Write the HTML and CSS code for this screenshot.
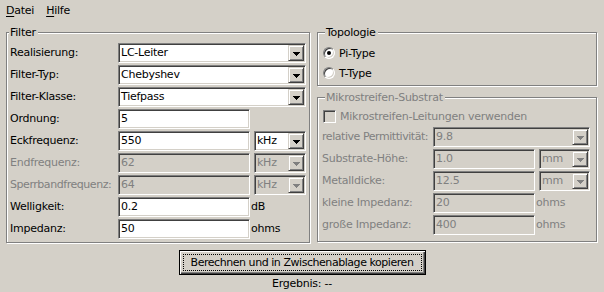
FILE: index.html
```html
<!DOCTYPE html>
<html lang="de">
<head>
    <meta charset="UTF-8">
    <title>Filter-Entwurf</title>
    <link rel="stylesheet" href="styles.css">
</head>
<body>
    <div class="menubar">
        <span class="menu"><u>D</u>atei</span>
        <span class="menu"><u>H</u>ilfe</span>
    </div>

    <div class="main">
        <div class="group filter">
            <span class="group-title">Filter</span>
            <div class="form">
                <span class="label">Realisierung:</span>
                <div class="combo span"><span class="value">LC-Leiter</span><span class="arrow"></span></div>

                <span class="label">Filter-Typ:</span>
                <div class="combo span"><span class="value">Chebyshev</span><span class="arrow"></span></div>

                <span class="label">Filter-Klasse:</span>
                <div class="combo span"><span class="value">Tiefpass</span><span class="arrow"></span></div>

                <span class="label">Ordnung:</span>
                <div class="field">5</div>
                <span></span>

                <span class="label">Eckfrequenz:</span>
                <div class="field">550</div>
                <div class="combo unit"><span class="value">kHz</span><span class="arrow"></span></div>

                <span class="label off">Endfrequenz:</span>
                <div class="field off">62</div>
                <div class="combo unit off"><span class="value">kHz</span><span class="arrow"></span></div>

                <span class="label off tight">Sperrbandfrequenz:</span>
                <div class="field off">64</div>
                <div class="combo unit off"><span class="value">kHz</span><span class="arrow"></span></div>

                <span class="label">Welligkeit:</span>
                <div class="field">0.2</div>
                <span class="label unit-text">dB</span>

                <span class="label">Impedanz:</span>
                <div class="field">50</div>
                <span class="label unit-text">ohms</span>
            </div>
        </div>

        <div class="side">
            <div class="group topo">
                <span class="group-title">Topologie</span>
                <div class="options">
                    <div class="option"><span class="radio checked"></span>Pi-Type</div>
                    <div class="option"><span class="radio"></span>T-Type</div>
                </div>
            </div>

            <div class="group micro">
                <span class="group-title off">Mikrostreifen-Substrat</span>
                <div class="check-row off"><span class="checkbox"></span>Mikrostreifen-Leitungen verwenden</div>
                <div class="form narrow">
                    <span class="label off tight">relative Permittivität:</span>
                    <div class="combo span off"><span class="value">9.8</span><span class="arrow"></span></div>

                    <span class="label off">Substrate-Höhe:</span>
                    <div class="field off">1.0</div>
                    <div class="combo unit off"><span class="value">mm</span><span class="arrow"></span></div>

                    <span class="label off">Metalldicke:</span>
                    <div class="field off">12.5</div>
                    <div class="combo unit off"><span class="value">mm</span><span class="arrow"></span></div>

                    <span class="label off">kleine Impedanz:</span>
                    <div class="field off">20</div>
                    <span class="label unit-text off">ohms</span>

                    <span class="label off">große Impedanz:</span>
                    <div class="field off">400</div>
                    <span class="label unit-text off">ohms</span>
                </div>
            </div>
        </div>
    </div>

    <div class="actions">
        <button class="default"><span class="focus">Berechnen und in Zwischenablage kopieren</span></button>
        <div class="result">Ergebnis: --</div>
    </div>
</body>
</html>
```

FILE: styles.css
```css
body {
    margin: 0;
    background: #d4d0c8;
    font: 11px/13px "DejaVu Sans", sans-serif;
    letter-spacing: -0.25px;
    color: #000;
}
.menubar {
    display: flex;
    height: 22px;
    padding-top: 4px;
    box-sizing: border-box;
}
.menu {
    padding: 0 6px;
}
.menu u {
    text-decoration-thickness: 1px;
    text-underline-offset: 2px;
}
.main {
    display: flex;
    align-items: flex-start;
    gap: 7px;
    padding: 10px 6px 0;
}

/* etched titled border */
.group {
    border: 1px solid #808080;
    box-shadow: inset 1px 1px 0 #fff, 1px 1px 0 #fff;
}
.group-title {
    display: block;
    width: max-content;
    margin-top: -7px;
    padding: 0 2px 0 1px;
    background: #d4d0c8;
}
.filter {
    width: 304px;
    box-sizing: border-box;
    padding: 0 3px 3px 3px;
}
.filter .group-title {
    margin-left: -1px;
}
.side {
    width: 280px;
    display: flex;
    flex-direction: column;
}
.topo, .micro {
    padding: 0 6px 2px 4px;
}
.topo .group-title, .micro .group-title {
    margin-left: 3px;
}
.micro {
    margin-top: 11px;
    padding-bottom: 6px;
}

.form {
    display: grid;
    grid-template-columns: 108px 132px 56px;
    grid-auto-rows: 20px;
    row-gap: 2px;
    margin-top: 4px;
}
.form.narrow {
    grid-template-columns: 111px 102px 55px;
    margin-top: 0;
}
.label {
    line-height: 20px;
    white-space: nowrap;
}
.label.tight {
    letter-spacing: -0.45px;
}
.unit-text {
    margin-left: 1px;
}
.off {
    color: #808080;
}

/* sunken controls */
.field, .combo {
    height: 20px;
    box-sizing: border-box;
    border: 1px solid;
    border-color: #808080 #fff #fff #808080;
    box-shadow: inset 1px 1px 0 #404040, inset -1px -1px 0 #d4d0c8;
    background: #fff;
    padding: 1px;
}
.field {
    padding-left: 2px;
    line-height: 16px;
}
.field.off, .combo.off {
    background: #d4d0c8;
}
.combo {
    display: flex;
}
.combo.span {
    grid-column: 2 / 4;
}
.combo.unit {
    margin-left: 4px;
}
.combo .value {
    flex: 1;
    padding-left: 1px;
    line-height: 16px;
}
.arrow {
    width: 16px;
    height: 16px;
    box-sizing: border-box;
    display: flex;
    align-items: center;
    justify-content: center;
    background: #d4d0c8;
    border: 1px solid;
    border-color: #d4d0c8 #404040 #404040 #d4d0c8;
    box-shadow: inset 1px 1px 0 #fff, inset -1px -1px 0 #808080;
    color: #000;
}
.combo.off .arrow {
    color: #808080;
}
.arrow::after {
    content: "";
    width: 7px;
    height: 4px;
    margin-top: 1px;
    background:
        linear-gradient(currentColor, currentColor) 0 0 / 7px 1px no-repeat,
        linear-gradient(currentColor, currentColor) 1px 1px / 5px 1px no-repeat,
        linear-gradient(currentColor, currentColor) 2px 2px / 3px 1px no-repeat,
        linear-gradient(currentColor, currentColor) 3px 3px / 1px 1px no-repeat;
}

.options {
    margin-top: 4px;
}
.option {
    display: flex;
    align-items: center;
    height: 20px;
    gap: 4px;
}
.radio {
    width: 12px;
    height: 12px;
    margin-left: 1px;
    box-sizing: border-box;
    border-radius: 50%;
    border: 1px solid;
    border-color: #808080 #fff #fff #808080;
    box-shadow: inset 1px 1px 0 #404040, inset -1px -1px 0 #d4d0c8;
    background: #fff;
    display: flex;
    align-items: center;
    justify-content: center;
}
.radio.checked::after {
    content: "";
    width: 4px;
    height: 4px;
    border-radius: 50%;
    background: #000;
}

.check-row {
    display: flex;
    align-items: center;
    gap: 4px;
    height: 22px;
    margin-top: 1px;
}
.checkbox {
    width: 13px;
    height: 13px;
    margin-left: 1px;
    box-sizing: border-box;
    border: 1px solid;
    border-color: #808080 #fff #fff #808080;
    box-shadow: inset 1px 1px 0 #404040, inset -1px -1px 0 #d4d0c8;
    background: #d4d0c8;
}

.actions {
    display: flex;
    flex-direction: column;
    align-items: center;
    margin-top: 7px;
}
button.default {
    width: 247px;
    height: 25px;
    box-sizing: border-box;
    padding: 3px;
    border: 1px solid #000;
    background: #d4d0c8;
    box-shadow: inset 1px 1px 0 #fff, inset -1px -1px 0 #404040, inset -2px -2px 0 #808080;
    font: inherit;
    letter-spacing: -0.45px;
    color: #000;
}
.focus {
    display: block;
    height: 100%;
    box-sizing: border-box;
    border: 1px dotted #000;
    line-height: 15px;
    white-space: nowrap;
}
.result {
    margin-top: 2px;
}
```
